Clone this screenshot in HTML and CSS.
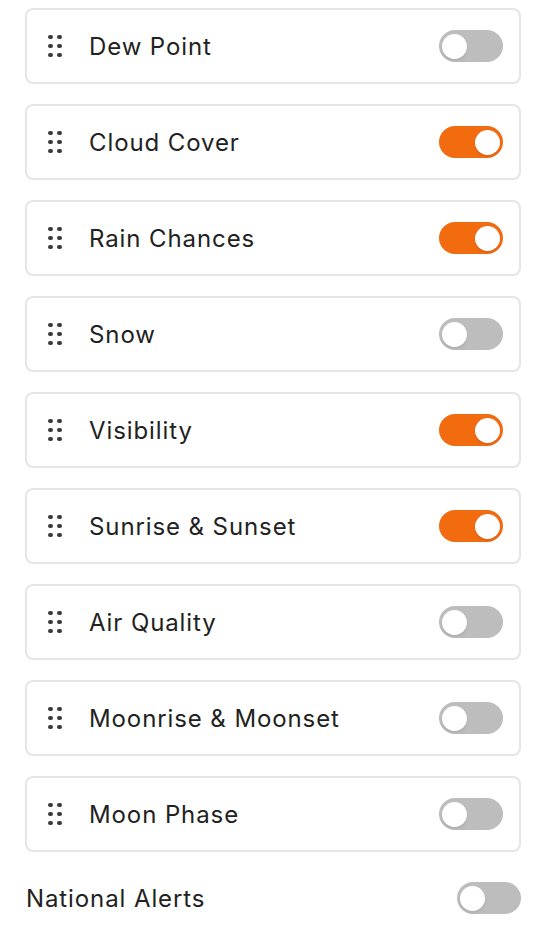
FILE: index.html
```html
<html>
<head>
<link rel="stylesheet" href="styles.css">
</head>
<body>
<div class="list">
  <div class="item"><span class="grip"><i></i><i></i><i></i><i></i><i></i><i></i></span><span class="label">Dew Point</span><span class="toggle"></span></div>
  <div class="item"><span class="grip"><i></i><i></i><i></i><i></i><i></i><i></i></span><span class="label">Cloud Cover</span><span class="toggle on"></span></div>
  <div class="item"><span class="grip"><i></i><i></i><i></i><i></i><i></i><i></i></span><span class="label">Rain Chances</span><span class="toggle on"></span></div>
  <div class="item"><span class="grip"><i></i><i></i><i></i><i></i><i></i><i></i></span><span class="label">Snow</span><span class="toggle"></span></div>
  <div class="item"><span class="grip"><i></i><i></i><i></i><i></i><i></i><i></i></span><span class="label">Visibility</span><span class="toggle on"></span></div>
  <div class="item"><span class="grip"><i></i><i></i><i></i><i></i><i></i><i></i></span><span class="label">Sunrise &amp; Sunset</span><span class="toggle on"></span></div>
  <div class="item"><span class="grip"><i></i><i></i><i></i><i></i><i></i><i></i></span><span class="label">Air Quality</span><span class="toggle"></span></div>
  <div class="item"><span class="grip"><i></i><i></i><i></i><i></i><i></i><i></i></span><span class="label">Moonrise &amp; Moonset</span><span class="toggle"></span></div>
  <div class="item"><span class="grip"><i></i><i></i><i></i><i></i><i></i><i></i></span><span class="label">Moon Phase</span><span class="toggle"></span></div>
</div>
<div class="row">
  <span class="label">National Alerts</span><span class="toggle"></span>
</div>
</body>
</html>
```
FILE: styles.css
```css
body{
margin:0; background:#fff; color:#222; font-family:Inter, "Noto Sans", sans-serif;
}
.list{
display:flex; flex-direction:column; gap:20px; padding:8px 0 0 25px; width:496px;
}
.item{
display:flex; align-items:center; height:76px; box-sizing:border-box; border:2px solid #e6e6e6; border-radius:8px; padding:0 16px 0 21px;
}
.grip{
display:grid; grid-template-columns:4px 4px; column-gap:5px; row-gap:4.5px; margin-right:28px;
}
.grip i{
display:block; width:4.5px; height:4.5px; border-radius:50%; background:#3a3a3a;
}
.label{
flex:1; font-size:24px; letter-spacing:0.9px;
}
.toggle{
position:relative; width:64px; height:32px; border-radius:16px; background:#bdbdbd; flex:none;
}
.toggle::after{
content:""; position:absolute; top:3.5px; left:3px; width:25px; height:25px; border-radius:50%; background:#fff; box-shadow:0 2px 3px rgba(0,0,0,0.08);
}
.toggle.on{
background:#f26b0f;
}
.toggle.on::after{
left:36px;
}
.row{
display:flex; align-items:center; padding:30px 30px 0 26px;
}
```
